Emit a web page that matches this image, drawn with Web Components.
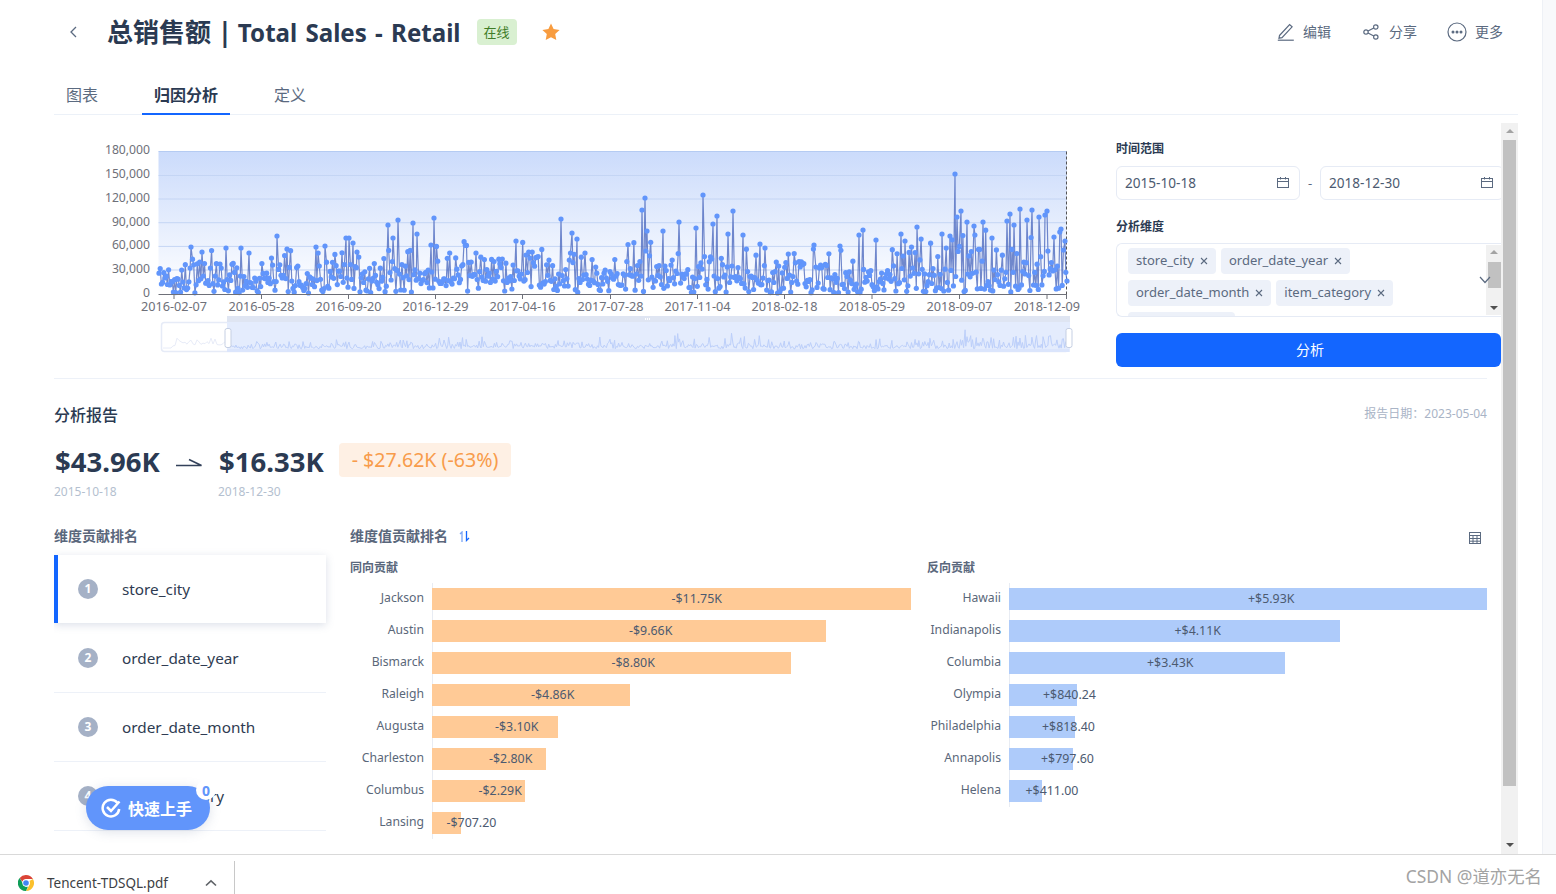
<!DOCTYPE html>
<html lang="zh">
<head>
<meta charset="utf-8">
<title>Total Sales - Retail</title>
<style>
  html, body { margin: 0; height: 100%; background: #fff; overflow: hidden; }
  body { font-family: "Noto Sans", "Noto Sans CJK SC", sans-serif; color: #2b3a52; }
</style>
</head>
<body>
<ts-app></ts-app>

<script>
class TsElement extends HTMLElement {
  constructor() {
    super();
    this.attachShadow({ mode: 'open' });
  }

  connectedCallback() {
    this.render();
  }

  getParsedAttribute(attrName) {
    try {
      return JSON.parse(this.getAttribute(attrName)) || [];
    } catch (e) {
      console.error(`Failed to parse ${attrName}:`, e);
      return [];
    }
  }
}

class TsHeader extends TsElement {
  render() {
    this.shadowRoot.innerHTML = `
      <style>
        :host { display: flex; align-items: center; height: 64px; color: #2b3a52; }
        .back { width: 54px; padding-left: 15px; box-sizing: border-box; display: flex; }
        h1 { margin: 0 0 0 -1px; font-size: 26px; font-weight: 700; line-height: 36px; white-space: nowrap; }
        h1 .en { font-size: 24.1px; word-spacing: 2px; margin-left: -1px; }
        .tag { margin-left: 16px; width: 40px; height: 26px; line-height: 26px; text-align: center; font-size: 13px;
               background: #d9f0d1; color: #3f7d28; border-radius: 4px; }
        .star { margin-left: 25px; display: flex; }
        .actions { margin-left: auto; display: flex; align-items: center; color: #5b6a80; font-size: 14px; padding-right: 15px; }
        .action { display: flex; align-items: center; }
        .action span { white-space: nowrap; margin-top: -2px; }
      </style>
      <div class="back">
        <svg width="8" height="12" viewBox="0 0 8 12" fill="none" stroke="#5b6a80" stroke-width="1.3"><path d="M7 1 2 6l5 5"/></svg>
      </div>
      <h1>总销售额 | <span class="en">Total Sales - Retail</span></h1>
      <div class="tag">在线</div>
      <div class="star">
        <svg width="18" height="18" viewBox="0 0 18 18"><path fill="#f89c3f" d="M9 .6l2.6 5.5 6 .8-4.4 4.2 1.1 6L9 14.2l-5.3 2.9 1.1-6L.4 6.9l6-.8z"/></svg>
      </div>
      <div class="actions">
        <div class="action" style="gap:8px">
          <svg width="18" height="18" viewBox="0 0 18 18" fill="none" stroke="#5b6a80" stroke-width="1.2"><path d="M2.5 12.5 12.6 1.6l2.5 2.3L5 14.6l-3 .6z"/><path d="M.8 17.2h16" /></svg>
          <span>编辑</span>
        </div>
        <div class="action" style="gap:10px;margin-left:32px">
          <svg width="16" height="16" viewBox="0 0 16 16" fill="none" stroke="#5b6a80" stroke-width="1.2"><circle cx="3" cy="8" r="2.2"/><circle cx="12.8" cy="3" r="2.2"/><circle cx="12.8" cy="13" r="2.2"/><path d="M5 7l5.8-3M5 9l5.8 3"/></svg>
          <span>分享</span>
        </div>
        <div class="action" style="gap:8px;margin-left:30px">
          <svg width="20" height="20" viewBox="0 0 20 20" fill="none" stroke="#5b6a80" stroke-width="1.2"><circle cx="10" cy="10" r="9"/><circle cx="6" cy="10" r=".9" fill="#5b6a80"/><circle cx="10" cy="10" r=".9" fill="#5b6a80"/><circle cx="14" cy="10" r=".9" fill="#5b6a80"/></svg>
          <span>更多</span>
        </div>
      </div>
    `;
  }
}

class TsTabs extends TsElement {
  render() {
    const tabs = this.getParsedAttribute('data-tabs');
    const active = this.getAttribute('data-active');
    this.shadowRoot.innerHTML = `
      <style>
        :host { display: flex; margin-top: 11px; border-bottom: 1px solid #ecf1f8; height: 39px; }
        .tab { height: 39px; line-height: 41px; padding: 0 12px; margin-right: 32px; font-size: 16px; color: #5b6a80; box-sizing: border-box; }
        .tab.on { color: #2b3a52; font-weight: 600; border-bottom: 2px solid #1366ff; height: 40px; }
      </style>
      ${tabs.map((tab) => `<div class="tab ${tab === active ? 'on' : ''}">${tab}</div>`).join('')}
    `;
  }
}

// seeded so the line looks the same on each run
function seeded(a) {
  return () => {
    a = (a + 0x6d2b79f5) | 0;
    let t = Math.imul(a ^ (a >>> 15), 1 | a);
    t = (t + Math.imul(t ^ (t >>> 7), 61 | t)) ^ t;
    return ((t ^ (t >>> 14)) >>> 0) / 4294967296;
  };
}

class TsTrendChart extends TsElement {
  buildPoints() {
    const rnd = seeded(42);
    const count = 760;
    const left = 159;
    const right = 1067;
    const axis = 294;
    const step = (right - left) / (count - 1);
    const points = [];
    for (let i = 0; i < count; i++) {
      const x = left + i * step;
      const scale = x > 900 ? 1.35 : x > 380 && x < 720 ? 1.1 : 0.95;
      const r = rnd();
      let h;
      if (r < 0.55) h = 1 + rnd() * 18;
      else if (r < 0.9) h = 12 + rnd() * 22;
      else h = 28 + rnd() * 20;
      points.push([x, axis - h * scale]);
    }
    // peaks read from the picture, in page pixels
    const peaks = [[191,247],[202,252],[226,248],[241,248],[249,253],[277,236],[287,249],[316,247],[325,246],[346,238],[349,238],[353,243],[357,252],[388,225],[393,238],[398,220],[413,223],[417,234],[434,218],[431,245],[476,253],[516,241],[526,255],[537,257],[561,219],[572,233],[577,239],[585,253],[642,210],[645,198],[647,231],[663,231],[679,222],[696,228],[703,195],[717,216],[713,224],[733,211],[728,234],[743,235],[760,244],[765,248],[814,245],[840,246],[859,235],[863,230],[876,240],[901,234],[905,241],[917,227],[942,234],[950,236],[955,174],[957,217],[961,211],[967,222],[974,226],[983,222],[992,238],[1007,221],[1010,214],[1020,209],[1014,225],[1027,220],[1032,210],[1040,191],[1039,217],[1047,211],[1045,215],[1054,237],[1061,229],[1065,241]];
    peaks.forEach(([x, y]) => {
      const index = Math.round((x - left) / step);
      points[index] = [x, y];
    });
    points[points.length - 1] = [1067, 281];
    return points;
  }

  render() {
    const points = this.buildPoints();
    const grid = [175.5, 199, 222.7, 246.4, 270];
    const yLabels = [['180,000', 154], ['150,000', 178], ['120,000', 202], ['90,000', 226], ['60,000', 249], ['30,000', 273], ['0', 297]];
    const ticks = [
      ['2016-02-07', 174], ['2016-05-28', 261.5], ['2016-09-20', 348.5], ['2016-12-29', 435.5], ['2017-04-16', 522.5], ['2017-07-28', 610.5],
      ['2017-11-04', 697.5], ['2018-02-18', 784.5], ['2018-05-29', 872], ['2018-09-07', 959.5], ['2018-12-09', 1047]
    ];
    const line = points.map((p) => p.map((n) => n.toFixed(1)).join(',')).join(' ');
    const scaleX = (1069 - 227) / (1067 - 159);
    const mini = points.map(([x, y]) => `${(227 + (x - 159) * scaleX).toFixed(1)},${(349 - (294 - y) * 0.16).toFixed(1)}`);
    const rnd = seeded(7);
    const faint = [];
    for (let x = 163; x <= 227; x += 2) {
      const h = x < 172 ? 1 : 3 + rnd() * 8;
      faint.push(`${x.toFixed(1)},${(349 - h).toFixed(1)}`);
    }
    this.shadowRoot.innerHTML = `
      <style>
        :host { display: block; width: 1062px; height: 255px; flex: none; }
        svg { display: block; }
        text { font-size: 12.2px; fill: #6e7079; }
        text.x { font-size: 12.7px; }
      </style>
      <svg width="1062" height="255" viewBox="54 123 1062 255">
        <defs>
          <linearGradient id="area" x1="0" y1="0" x2="0" y2="1">
            <stop offset="0" stop-color="#cbdbfb"/>
            <stop offset="1" stop-color="#ffffff"/>
          </linearGradient>
        </defs>
        <rect x="158.5" y="151.5" width="908.5" height="142.5" fill="url(#area)"/>
        <path d="M158.5 151.5H1067" stroke="#b5cbf2"/>
        ${grid.map((y) => `<path d="M158.5 ${y}H1067" stroke="#c4d5f4"/>`).join('')}
        ${yLabels.map(([t, y]) => `<text x="150" y="${y}" text-anchor="end">${t}</text>`).join('')}
        <path d="M1066.5 151.5V294" stroke="#555" stroke-dasharray="3 2"/>
        <polyline points="${line}" fill="none" stroke="#4f6bbf" stroke-width="1.2" stroke-opacity=".8"/>
        ${points.map(([x, y]) => `<circle cx="${x.toFixed(1)}" cy="${y.toFixed(1)}" r="2.6" fill="#6195fb"/>`).join('')}
        <path d="M158.5 294.5H1067" stroke="#6e7079"/>
        ${ticks.map(([, x]) => `<path d="M${x} 294V299" stroke="#6e7079"/>`).join('')}
        <path d="M1066.5 294V299" stroke="#6e7079"/>
        ${ticks.map(([t, x]) => `<text class="x" x="${x}" y="311" text-anchor="middle">${t}</text>`).join('')}
        <rect x="161.5" y="322.5" width="907" height="29" rx="3" fill="none" stroke="#e6ebf7" stroke-width="1.5"/>
        <polyline points="${faint.join(' ')}" fill="none" stroke="#e8ecf8"/>
        <rect x="227" y="316" width="843" height="6" fill="#dfe5f2"/>
        <rect x="227" y="322" width="843" height="30" fill="#e4ecfd"/>
        <path d="M227 349H1069V352H227z" fill="#d8e3fb" opacity=".8"/>
        <polyline points="${mini.join(' ')}" fill="none" stroke="#bccffa"/>
        <path d="M645 319h6" stroke="#fff" stroke-width="2" stroke-dasharray="1 1"/>
        <rect x="225" y="328.5" width="6" height="19" rx="2" fill="#fff" stroke="#c5cfe3"/>
        <rect x="1066" y="328.5" width="6" height="19" rx="2" fill="#fff" stroke="#c5cfe3"/>
      </svg>
    `;
  }
}

class TsTag extends TsElement {
  render() {
    this.shadowRoot.innerHTML = `
      <style>
        :host { display: flex; align-items: center; height: 26px; padding: 0 8px 2px; box-sizing: border-box; gap: 6px; flex: none;
                background: #edf1f9; border-radius: 4px; font-size: 13px; color: #5b6a80; white-space: nowrap; }
        svg { display: block; margin-top: 2px; }
      </style>
      <slot></slot>
      <svg width="8" height="8" viewBox="0 0 8 8" stroke="#5b6a80" stroke-width="1.1"><path d="M1 1l6 6M7 1 1 7"/></svg>
    `;
  }
}

class TsFilter extends TsElement {
  render() {
    const calendar = `<svg width="12" height="11" viewBox="0 0 12 11" fill="none" stroke="#5b6a80"><rect x=".5" y="1.5" width="11" height="9"/><path d="M.5 4.5h11M3.5 0v2.5M8.5 0v2.5"/></svg>`;
    this.shadowRoot.innerHTML = `
      <style>
        :host { display: block; width: 385px; height: 255px; flex: none; padding-top: 17px; box-sizing: border-box; overflow: hidden; }
        label { display: block; height: 17px; line-height: 17px; font-size: 12px; font-weight: 700; color: #2b3a52; }
        .dates { display: flex; margin-top: 9px; width: 392px; }
        .date { width: 184px; height: 34px; box-sizing: border-box; flex: none; display: flex; align-items: center; justify-content: space-between;
                border: 1px solid #e6ebf5; border-radius: 6px; padding: 0 10px 1px 8px; font-size: 13.6px; color: #4c5a70; }
        .dash { width: 20px; text-align: center; line-height: 34px; font-size: 13px; color: #5b6a80; }
        .select { position: relative; display: flex; height: 74px; margin-top: 8px; box-sizing: border-box; overflow: hidden;
                  border: 1px solid #e6ebf5; border-right: 0; border-radius: 6px 0 0 6px; }
        .tags { flex: 1; display: flex; flex-wrap: wrap; gap: 6px 5px; align-content: flex-start; padding: 4px 0 0 11px; }
        .stub { width: 107px; height: 26px; background: #edf1f9; border-radius: 4px; }
        .bar { width: 15px; margin: 1px 0; flex: none; background: #f1f1f1; display: flex; flex-direction: column; align-items: center; justify-content: space-between; position: relative; }
        .thumb { position: absolute; top: 17px; left: 2px; right: 0; height: 26px; background: #c1c1c1; }
        .arrow-up { margin-top: 5px; border: 4px solid transparent; border-top: 0; border-bottom: 4px solid #a3a3a3; }
        .arrow-down { margin-bottom: 5px; border: 4px solid transparent; border-bottom: 0; border-top: 4px solid #505050; }
        .chevron { position: absolute; right: 10px; top: 32px; }
        button { display: block; width: 100%; height: 34px; margin-top: 16px; border: 0; border-radius: 6px; background: #1366ff; color: #fff;
                 font: inherit; font-size: 14px; padding: 0 0 2px 3px; }
      </style>
      <label>时间范围</label>
      <div class="dates">
        <div class="date">2015-10-18 ${calendar}</div>
        <div class="dash">-</div>
        <div class="date">2018-12-30 ${calendar}</div>
      </div>
      <label style="margin-top:18px">分析维度</label>
      <div class="select">
        <div class="tags">
          <ts-tag>store_city</ts-tag>
          <ts-tag>order_date_year</ts-tag>
          <ts-tag>order_date_month</ts-tag>
          <ts-tag>item_category</ts-tag>
          <div class="stub"></div>
        </div>
        <div class="bar"><i class="arrow-up"></i><div class="thumb"></div><i class="arrow-down"></i></div>
        <svg class="chevron" width="12" height="8" viewBox="0 0 12 8" fill="none" stroke="#5b6a80" stroke-width="1.2"><path d="M1 1l5 5.5L11 1"/></svg>
      </div>
      <button>分析</button>
    `;
  }
}

class TsSummary extends TsElement {
  render() {
    this.shadowRoot.innerHTML = `
      <style>
        :host { display: block; }
        .head { display: flex; justify-content: space-between; align-items: center; height: 22px; margin-top: 25px; }
        h2 { margin: 0; font-size: 16px; font-weight: 500; color: #2b3a52; line-height: 22px; }
        .date { font-size: 12px; color: #a9b4c6; margin-top: -4px; }
        .row { display: flex; align-items: center; margin-top: 17px; height: 34px; }
        .num { font-size: 27.5px; font-weight: 700; line-height: 34px; color: #2b3a52; white-space: nowrap; margin-top: 4px; }
        .first { width: 106px; padding-left: 1px; box-sizing: border-box; }
        .arrow { margin: 4px 17px 0 16px; display: block; }
        .badge { margin-left: 15px; height: 34px; line-height: 34px; padding: 0 13px; background: #fef0e4; color: #f89c4b; font-size: 19.6px; border-radius: 4px; white-space: nowrap; }
        .subs { display: flex; font-size: 12px; color: #b4bfcf; line-height: 16px; margin-top: 7px; }
        .subs span:first-child { width: 164px; }
      </style>
      <div class="head"><h2>分析报告</h2><div class="date">报告日期：2023-05-04</div></div>
      <div class="row">
        <div class="num first">$43.96K</div>
        <svg class="arrow" width="26" height="9" viewBox="0 0 26 9" fill="none" stroke="#33415a" stroke-width="1.6"><path d="M0 7.5h25.5L13 1.5"/></svg>
        <div class="num">$16.33K</div>
        <div class="badge">- $27.62K (-63%)</div>
      </div>
      <div class="subs"><span>2015-10-18</span><span>2018-12-30</span></div>
    `;
  }
}

class TsRankItem extends TsElement {
  render() {
    const index = this.getAttribute('data-index');
    this.shadowRoot.innerHTML = `
      <style>
        :host { display: flex; align-items: center; height: 69px; box-sizing: border-box; padding-left: 24px; gap: 24px;
                border-bottom: 1px solid #edf1f8; font-size: 15.3px; color: #2f3c52; }
        :host([data-active]) { height: 68px; border-bottom: 0; border-left: 4px solid #1366ff; padding-left: 20px; margin-bottom: 1px;
                               background: #fff; box-shadow: 0 2px 8px rgba(90, 110, 150, .22); }
        .circle { width: 20px; height: 20px; border-radius: 50%; background: #a5b1c6; color: #fff; font-size: 12px; font-weight: 700;
                  line-height: 20px; text-align: center; flex: none; }
      </style>
      <div class="circle">${index}</div>
      <slot></slot>
    `;
  }
}

class TsBarChart extends TsElement {
  render() {
    const rows = this.getParsedAttribute('data-rows');
    const color = this.getAttribute('data-color') || '#ffca96';
    this.shadowRoot.innerHTML = `
      <style>
        :host { display: block; }
        h3 { margin: 0; height: 18px; line-height: 18px; font-size: 12px; font-weight: 700; color: #5a677c; }
        .rows { margin-top: 6px; }
        .row { display: flex; height: 32px; }
        .name { width: 82px; padding-right: 8px; box-sizing: border-box; text-align: right; font-size: 12.2px; line-height: 20px; padding-top: 5px; color: #5a6779; white-space: nowrap; flex: none; }
        .track { flex: 1; border-left: 1px solid #e8ecf3; padding: 5px 0; box-sizing: border-box; }
        .bar { height: 22px; line-height: 22px; margin-left: -1px; background: ${color}; font-size: 12.4px; color: #4c5a70; white-space: nowrap; }
        .value { padding-left: 50%; }
      </style>
      <h3>${this.getAttribute('data-title')}</h3>
      <div class="rows">
        ${rows
          .map(
            (row) => `
            <div class="row">
              <div class="name">${row.name}</div>
              <div class="track"><div class="bar" style="width:${row.width}px"><div class="value">${row.value}</div></div></div>
            </div>
          `
          )
          .join('')}
      </div>
    `;
  }
}

class TsReport extends TsElement {
  render() {
    this.shadowRoot.innerHTML = `
      <style>
        :host { display: flex; gap: 24px; margin-top: 27px; }
        .side { width: 272px; flex: none; }
        .main { flex: 1; min-width: 0; }
        .title { height: 18px; line-height: 18px; font-size: 14px; font-weight: 700; color: #5a677c; display: flex; align-items: center; white-space: nowrap; }
        .list { margin-top: 10px; }
        .charts { display: grid; grid-template-columns: 561px 560px; gap: 16px; margin-top: 14px; }
        .sort { margin-left: 11px; }
        .grid-icon { margin-left: auto; margin-right: 6px; margin-top: 4px; }
      </style>
      <div class="side">
        <div class="title">维度贡献排名</div>
        <div class="list">
          <ts-rank-item data-index="1" data-active>store_city</ts-rank-item>
          <ts-rank-item data-index="2">order_date_year</ts-rank-item>
          <ts-rank-item data-index="3">order_date_month</ts-rank-item>
          <ts-rank-item data-index="4">item_category</ts-rank-item>
        </div>
      </div>
      <div class="main">
        <div class="title">
          维度值贡献排名
          <svg class="sort" width="11" height="11" viewBox="0 0 11 11" fill="none" stroke-width="1.3"><path d="M1 3 3 1v10" stroke="#7aa5f5"/><path d="M7.5 0v9.5l2.5-2.5" stroke="#1366ff"/></svg>
          <svg class="grid-icon" width="12" height="12" viewBox="0 0 12 12" fill="none" stroke="#5b6a80"><rect x=".5" y=".5" width="11" height="11"/><path d="M.5 3.5h11M.5 6.5h11M.5 9.2h11M4 3.5v8M8 3.5v8"/></svg>
        </div>
        <div class="charts">
          <ts-bar-chart id="same" data-title="同向贡献" data-color="#ffca96"></ts-bar-chart>
          <ts-bar-chart id="reverse" data-title="反向贡献" data-color="#aecbfa"></ts-bar-chart>
        </div>
      </div>
    `;
    this.shadowRoot.getElementById('same').setAttribute('data-rows', JSON.stringify([
      { name: 'Jackson', value: '-$11.75K', width: 479 },
      { name: 'Austin', value: '-$9.66K', width: 394 },
      { name: 'Bismarck', value: '-$8.80K', width: 359 },
      { name: 'Raleigh', value: '-$4.86K', width: 198 },
      { name: 'Augusta', value: '-$3.10K', width: 126 },
      { name: 'Charleston', value: '-$2.80K', width: 114 },
      { name: 'Columbus', value: '-$2.29K', width: 93 },
      { name: 'Lansing', value: '-$707.20', width: 29 }
    ]));
    this.shadowRoot.getElementById('reverse').setAttribute('data-rows', JSON.stringify([
      { name: 'Hawaii', value: '+$5.93K', width: 478 },
      { name: 'Indianapolis', value: '+$4.11K', width: 331 },
      { name: 'Columbia', value: '+$3.43K', width: 276 },
      { name: 'Olympia', value: '+$840.24', width: 68 },
      { name: 'Philadelphia', value: '+$818.40', width: 66 },
      { name: 'Annapolis', value: '+$797.60', width: 64 },
      { name: 'Helena', value: '+$411.00', width: 33 }
    ]));
    this.shadowRoot.querySelectorAll('ts-bar-chart').forEach((chart) => chart.render());
  }
}

class TsScrollbar extends TsElement {
  render() {
    this.shadowRoot.innerHTML = `
      <style>
        :host { display: flex; flex-direction: column; align-items: center; width: 17px; flex: none; background: #f1f1f1; box-sizing: border-box; position: relative; }
        .thumb { position: absolute; top: 17px; left: 2px; width: 13px; height: 646px; background: #c1c1c1; }
        .up { margin-top: 6px; border: 4px solid transparent; border-top: 0; border-bottom: 4px solid #a3a3a3; }
        .down { margin-top: auto; margin-bottom: 7px; border: 4px solid transparent; border-bottom: 0; border-top: 4px solid #505050; }
      </style>
      <i class="up"></i><div class="thumb"></div><i class="down"></i>
    `;
  }
}

class TsQuickStart extends TsElement {
  render() {
    this.shadowRoot.innerHTML = `
      <style>
        :host { position: absolute; left: 86px; top: 786px; width: 124px; height: 44px; border-radius: 22px; background: #6195fb; color: #fff;
                display: flex; align-items: center; padding: 0 0 1px 15px; box-sizing: border-box; gap: 7px; font-size: 16px; font-weight: 700;
                box-shadow: 0 2px 12px rgba(90, 110, 150, .2); white-space: nowrap; }
        svg { display: block; flex: none; }
        .count { position: absolute; left: 110px; top: -6px; width: 20px; height: 20px; border-radius: 50%; background: #fff; color: #6195fb;
                 font-size: 14px; line-height: 21px; text-align: center; }
      </style>
      <svg width="20" height="20" viewBox="0 0 20 20" fill="none" stroke="#fff" stroke-width="2.5"><path d="M16.5 5A8.3 8.3 0 1 0 18.2 11"/><path d="M6 9l4 4 8.5-9.5"/></svg>
      <span>快速上手</span>
      <div class="count">0</div>
    `;
  }
}

class TsDownloads extends TsElement {
  render() {
    this.shadowRoot.innerHTML = `
      <style>
        :host { display: flex; align-items: center; height: 40px; border-top: 1px solid #d9d9d9; box-sizing: border-box; background: #fff; position: relative; }
        .logo { margin-left: 18px; margin-top: 16px; flex: none; }
        .file { margin-left: 13px; margin-top: 16px; font-size: 13.5px; color: #3c4043; white-space: nowrap; width: 158px; }
        .chev { margin-top: 16px; flex: none; }
        .divider { margin-left: 17px; width: 1px; height: 33px; margin-top: 6px; background: #c8c8c8; }
        .mark { margin-left: auto; margin-top: 2px; padding-right: 14px; font-size: 17.4px; color: #a3a3a3; white-space: nowrap; }
      </style>
      <svg class="logo" width="16" height="16" viewBox="0 0 16 16">
        <path d="M8 0a8 8 0 0 1 6.93 4H8a4 4 0 0 0-3.8 2.7L1.7 2.9A8 8 0 0 1 8 0z" fill="#db4437"/>
        <path d="M14.93 4A8 8 0 0 1 8 16l3.4-5.9A4 4 0 0 0 11.4 6L14.93 4z" fill="#fbc02d"/>
        <path d="M1.7 2.9 4.9 8.5A4 4 0 0 0 10 11.5L8 16A8 8 0 0 1 1.7 2.9z" fill="#0f9d58"/>
        <circle cx="8" cy="8" r="3.6" fill="#fff"/><circle cx="8" cy="8" r="2.8" fill="#4285f4"/>
      </svg>
      <div class="file">Tencent-TDSQL.pdf</div>
      <svg class="chev" width="12" height="8" viewBox="0 0 12 8" fill="none" stroke="#5f6368" stroke-width="1.6"><path d="M1 6.5 6 1.8l5 4.7"/></svg>
      <div class="divider"></div>
      <div class="mark">CSDN @道亦无名</div>
    `;
  }
}

class TsApp extends TsElement {
  render() {
    this.shadowRoot.innerHTML = `
      <style>
        :host { display: flex; flex-direction: column; width: 1556px; height: 894px; overflow: hidden; position: relative; }
        .top { flex: 1; min-height: 0; display: flex; }
        .page { width: 1464px; margin-left: 54px; min-width: 0; display: flex; flex-direction: column; }
        .gutter { width: 14px; margin-left: 24px; background: #f8f9fb; border-left: 1px solid #eef1f6; box-sizing: border-box; flex: none; }
        .body { flex: 1; min-height: 0; display: flex; margin-top: 8px; }
        .content { flex: 1; min-width: 0; overflow: hidden; }
        .upper { display: flex; }
        .rule { width: 1433px; height: 1px; background: #edf1f8; }
        .lower { width: 1433px; }
      </style>
      <div class="top">
        <div class="page">
          <ts-header></ts-header>
          <ts-tabs data-tabs='["图表","归因分析","定义"]' data-active="归因分析"></ts-tabs>
          <div class="body">
            <div class="content">
              <div class="upper"><ts-trend-chart></ts-trend-chart><ts-filter></ts-filter></div>
              <div class="rule"></div>
              <div class="lower">
                <ts-summary></ts-summary>
                <ts-report></ts-report>
              </div>
            </div>
            <ts-scrollbar></ts-scrollbar>
          </div>
        </div>
        <div class="gutter"></div>
      </div>
      <ts-downloads></ts-downloads>
      <ts-quick-start></ts-quick-start>
    `;
  }
}

customElements.define('ts-header', TsHeader);
customElements.define('ts-tabs', TsTabs);
customElements.define('ts-trend-chart', TsTrendChart);
customElements.define('ts-tag', TsTag);
customElements.define('ts-filter', TsFilter);
customElements.define('ts-summary', TsSummary);
customElements.define('ts-rank-item', TsRankItem);
customElements.define('ts-bar-chart', TsBarChart);
customElements.define('ts-report', TsReport);
customElements.define('ts-scrollbar', TsScrollbar);
customElements.define('ts-quick-start', TsQuickStart);
customElements.define('ts-downloads', TsDownloads);
customElements.define('ts-app', TsApp);
</script>
</body>
</html>
